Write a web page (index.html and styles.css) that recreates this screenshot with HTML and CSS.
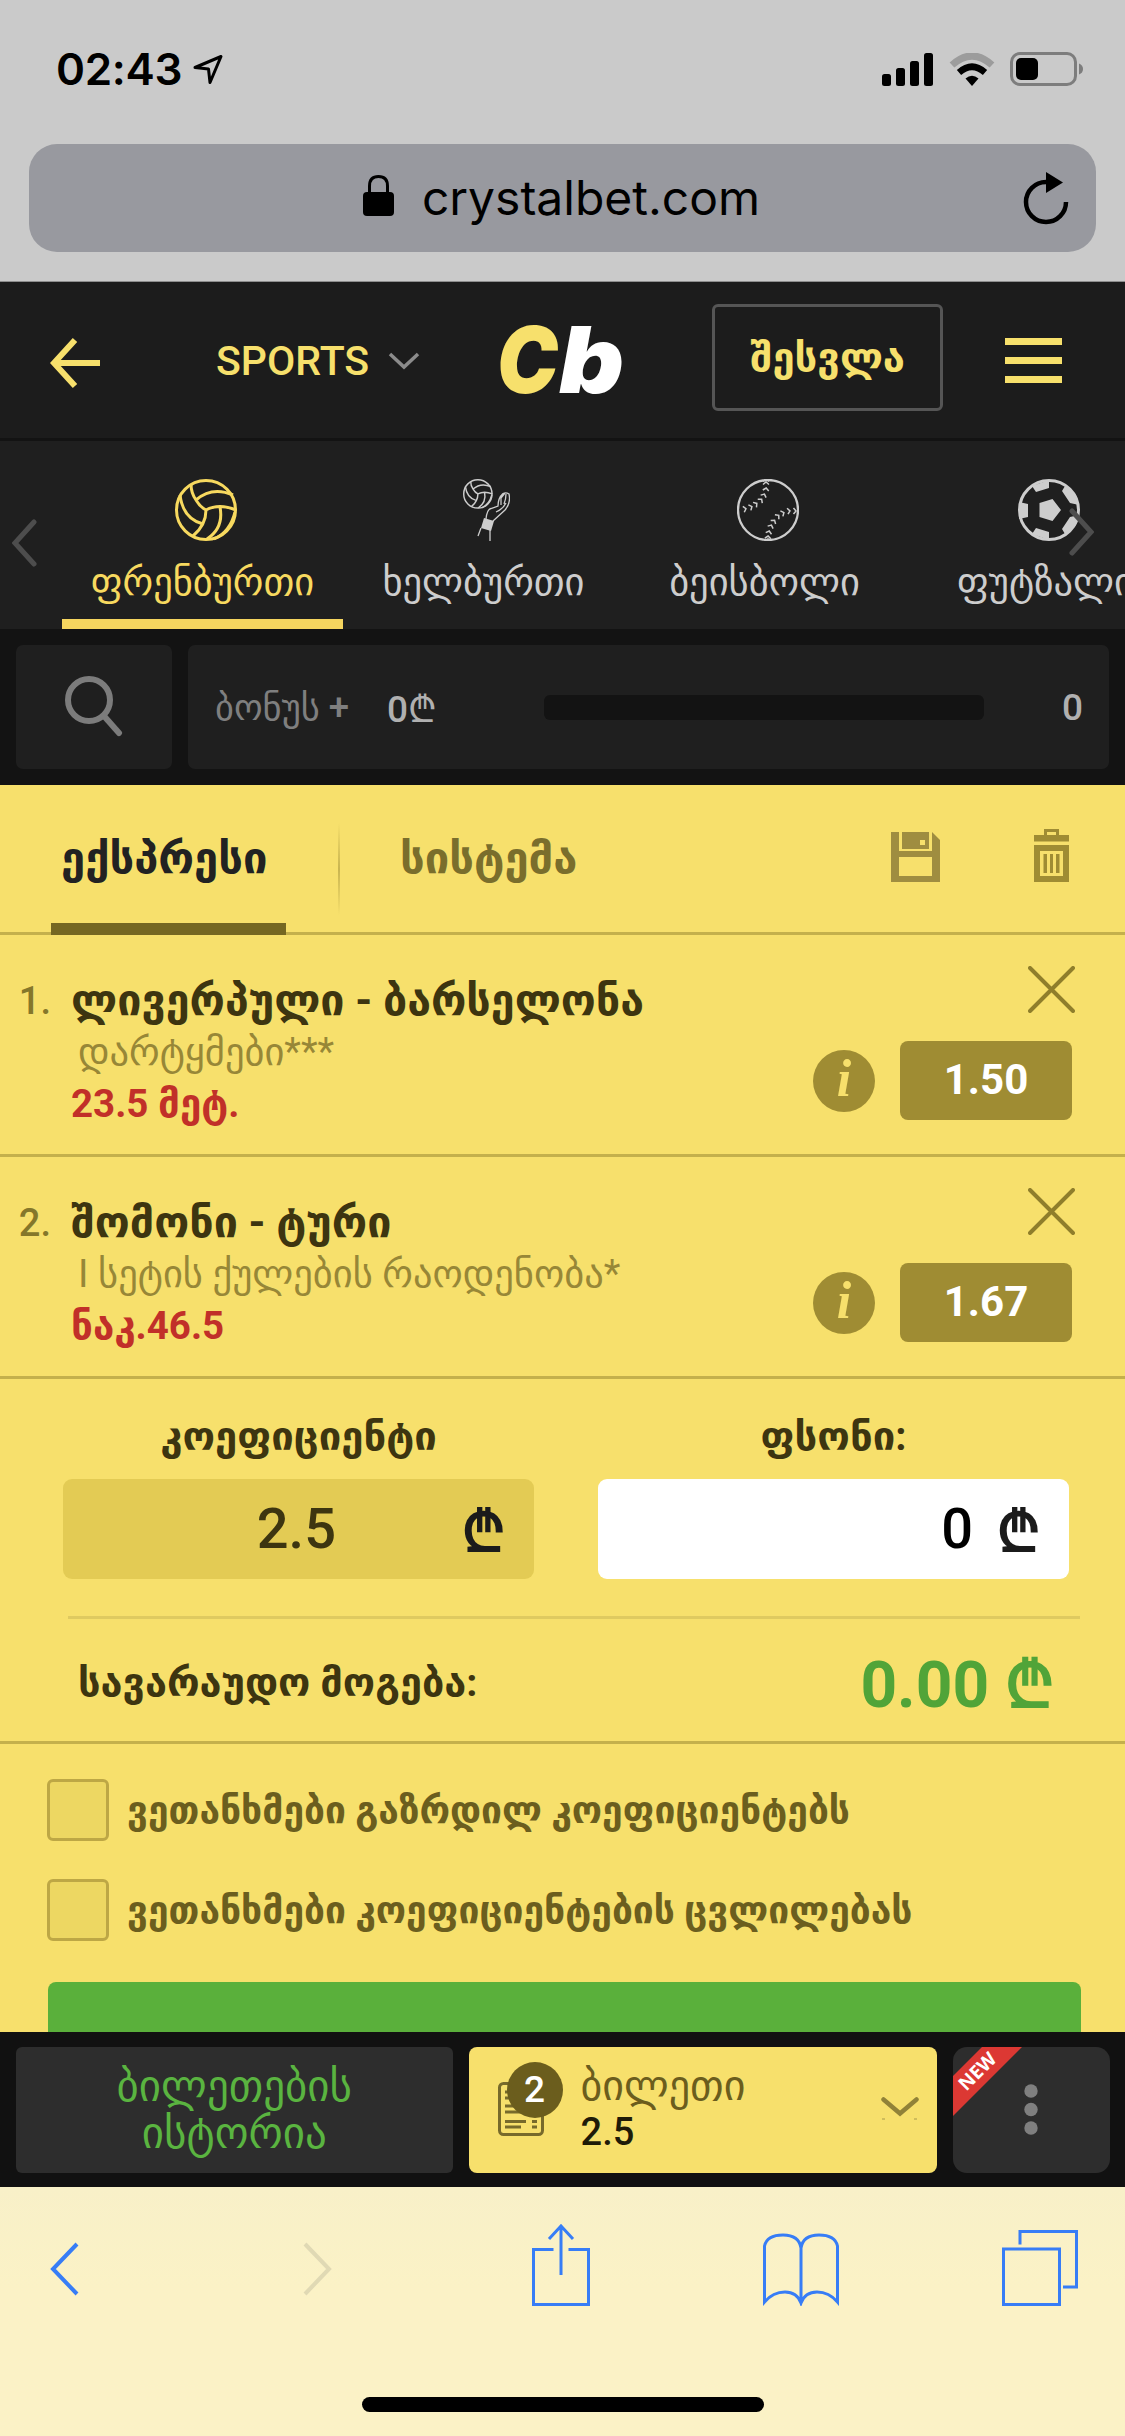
FILE: index.html
```html
<!DOCTYPE html>
<html lang="ka">
<head>
    <meta charset="UTF-8">
    <meta name="viewport" content="width=device-width, initial-scale=1.0">
    <title>Crystalbet</title>
    <link rel="stylesheet" href="styles.css">
</head>
<body>
    <div class="browser-top">
        <div class="status">
            <span class="time">02:43</span>
            <svg class="location" width="31" height="31" viewBox="0 0 31 31"><path d="M2 13.500L28 2.500L17 28.500L15.500 15Z" fill="none" stroke="#000" stroke-width="3" stroke-linejoin="round"/></svg>
            <div class="status-icons">
                <svg width="52" height="33" viewBox="0 0 52 33"><rect x="0" y="21" width="9" height="12" rx="2.500"/><rect x="14" y="15" width="9" height="18" rx="2.500"/><rect x="28" y="8" width="9" height="25" rx="2.500"/><rect x="42" y="0" width="9" height="33" rx="2.500"/></svg>
                <svg width="46" height="33" viewBox="0 0 46 33"><path d="M3 12Q23-6 43 12" fill="none" stroke="#9c9c9c" stroke-width="7"/><path d="M10 19.500Q23 8 36 19.500" fill="none" stroke="#000" stroke-width="6.500"/><path d="M16.500 25.500Q23 20 29.500 25.500L23 33Z"/></svg>
                <svg width="75" height="34" viewBox="0 0 75 34"><rect x="1.500" y="1.500" width="64" height="31" rx="8.500" fill="none" stroke="#7d7d7d" stroke-width="3"/><rect x="6" y="6" width="22" height="22" rx="5"/><path d="M69 11.500Q73 13 73 17T69 22.500Z" fill="#7d7d7d"/></svg>
            </div>
        </div>
        <div class="url-bar">
            <svg class="lock" width="31" height="42" viewBox="0 0 31 42"><rect x="0" y="17" width="31" height="24" rx="4"/><path d="M6.500 18V11Q6.500 1.500 15.500 1.500T24.500 11V18" fill="none" stroke="#000" stroke-width="3"/></svg>
            <span>crystalbet.com</span>
            <svg class="reload" width="48" height="54" viewBox="0 0 48 54"><path d="M24 11A20 20 0 1 0 44 31" fill="none" stroke="#000" stroke-width="4.500"/><path d="M24 1L41 11.500L24 22Z"/></svg>
        </div>
    </div>

    <header class="header">
        <svg class="back" width="50" height="52" viewBox="0 0 50 52"><path d="M25 3L4 26L25 49M4 26H50" fill="none" stroke="#f7e06c" stroke-width="6"/></svg>
        <div class="menu-name">SPORTS
            <svg width="32" height="20" viewBox="0 0 32 20"><path d="M2 3L16 16L30 3" fill="none" stroke="#8b8b8b" stroke-width="3.500"/></svg>
        </div>
        <svg class="logo" width="128" height="76" viewBox="0 0 128 76"><text class="logo-c" x="-3" y="71" textLength="61" lengthAdjust="spacingAndGlyphs">C</text><text class="logo-b" x="59" y="71" textLength="65" lengthAdjust="spacingAndGlyphs">b</text></svg>
        <a class="login">შესვლა</a>
        <div class="burger"><i></i><i></i><i></i></div>
    </header>

    <nav class="sports">
        <div class="sport active">
            <svg width="62" height="62" viewBox="0 0 62 62">
                <g id="volleyball" fill="none" stroke="currentColor" stroke-width="3">
                    <circle cx="31" cy="31" r="29.500"/>
                    <path d="M16 5Q16 14 21 21Q25 28 31 31Q31 46 18 57M31 31Q44 24 61 31M21 21Q37 7 58 16M5 16Q8 40 28 45M45 28Q49 49 32 60M60 33Q55 53 39 60"/>
                </g>
            </svg>
            <span>ფრენბურთი</span>
        </div>
        <div class="sport">
            <svg width="47" height="62" viewBox="0 0 47 62">
                <use href="#volleyball" transform="scale(.48)"/>
                <path d="M23 40Q24 30 28 29.500L35 27Q35 19 40 14.500Q43 13 46 15Q48 24 42 31L30 42M33 33Q40 30 43 24M38 26V19L42 14M41 25Q43 20 43 15M18 49L15 57M27 51V62" fill="none" stroke="currentColor" stroke-width="1.300"/>
                <path d="M21 39L31 42L28 52L18 49Z" fill="currentColor"/>
            </svg>
            <span>ხელბურთი</span>
        </div>
        <div class="sport">
            <svg width="62" height="62" viewBox="0 0 62 62">
                <defs><marker id="stitch" orient="auto" markerUnits="userSpaceOnUse" markerWidth="8" markerHeight="8" refX="4" refY="4"><path d="M2.500 1L5 4L2.500 7" fill="none" stroke="#cdcdcd" stroke-width="1.500"/></marker></defs>
                <circle cx="31" cy="31" r="30" fill="none" stroke="currentColor" stroke-width="2.300"/>
                <path d="M2 31L8 30L14 28L19 25L24 21L27 16L29 10L29 4L29 1M31 61L31 58L32 53L34 47L37 42L41 37L46 34L52 32L58 32L61 32" fill="none" marker-mid="url(#stitch)"/>
            </svg>
            <span>ბეისბოლი</span>
        </div>
        <div class="sport">
            <svg width="62" height="62" viewBox="0 0 62 62">
                <circle cx="31" cy="31" r="29.500" fill="none" stroke="currentColor" stroke-width="3"/>
                <path fill="currentColor" d="M21.500 24L34.500 20L43 31L34.500 42L21.500 38ZM1 23L10 25V38L1 40ZM14 7L18 13L31 9V1ZM44 12L47 7L58 16L61 26L52 24ZM14 55L18 49L31 53V61ZM44 50L47 55L58 46L61 36L52 38Z"/>
            </svg>
            <span>ფუტზალი</span>
        </div>
        <svg class="arrow arrow-left" width="26" height="48" viewBox="0 0 26 48"><path d="M22 3L3 24L22 45" fill="none" stroke="#4d4d4d" stroke-width="5" stroke-linecap="round"/></svg>
        <svg class="arrow arrow-right" width="26" height="48" viewBox="0 0 26 48"><path d="M4 3L23 24L4 45" fill="none" stroke="#4d4d4d" stroke-width="5" stroke-linecap="round"/></svg>
    </nav>

    <div class="tools">
        <div class="search">
            <svg width="58" height="64" viewBox="0 0 58 64"><circle cx="24" cy="25" r="21" fill="none" stroke="#7c7c7c" stroke-width="6"/><path d="M39 41L54 58" stroke="#7c7c7c" stroke-width="6" stroke-linecap="round"/></svg>
        </div>
        <div class="bonus">
            <span class="bonus-name">ბონუს +</span>
            <span class="bonus-sum">0₾</span>
            <span class="progress"></span>
            <span class="bonus-count">0</span>
        </div>
    </div>

    <main class="slip">
        <div class="slip-tabs">
            <div class="slip-tab current">ექსპრესი</div>
            <div class="divider"></div>
            <div class="slip-tab">სისტემა</div>
            <svg class="save" width="49" height="50" viewBox="0 0 49 50"><path fill="#9f8d40" fill-rule="evenodd" d="M0 0H8V19H41V0L49 8V50H0ZM8 25V44H41V25ZM11 0H38V17H11ZM29 8V13H34V8Z"/></svg>
            <svg class="trash" width="35" height="53" viewBox="0 0 35 53"><path fill="#9f8c33" fill-rule="evenodd" d="M0 6H10V0H25V6H35V12.500H0ZM13 3V6H22V3ZM0 16H35V53H0ZM6 22V47H29V22Z"/><path fill="#9f8c33" d="M9.500 25h3.500v19H9.500ZM16 25h3v19h-3ZM22 25h3.500v19H22Z"/></svg>
        </div>

        <div class="bet">
            <div class="bet-no">1.</div>
            <div class="bet-info">
                <div class="bet-title">ლივერპული - ბარსელონა</div>
                <div class="bet-market">დარტყმები***</div>
                <div class="bet-pick">23.5 მეტ.</div>
            </div>
            <div class="bet-side">
                <svg class="remove" width="47" height="47" viewBox="0 0 47 47"><path d="M2 2L45 45M45 2L2 45" stroke="#8f7e2b" stroke-width="4" stroke-linecap="round"/></svg>
                <div class="bet-odds"><span class="info">i</span><span class="odd">1.50</span></div>
            </div>
        </div>

        <div class="bet">
            <div class="bet-no">2.</div>
            <div class="bet-info">
                <div class="bet-title">შომონი - ტური</div>
                <div class="bet-market">I სეტის ქულების რაოდენობა*</div>
                <div class="bet-pick">ნაკ.46.5</div>
            </div>
            <div class="bet-side">
                <svg class="remove" width="47" height="47" viewBox="0 0 47 47"><path d="M2 2L45 45M45 2L2 45" stroke="#8f7e2b" stroke-width="4" stroke-linecap="round"/></svg>
                <div class="bet-odds"><span class="info">i</span><span class="odd">1.67</span></div>
            </div>
        </div>

        <div class="stake">
            <div class="field">
                <label>კოეფიციენტი</label>
                <div class="box coef"><span class="value">2.5</span><span class="lari">₾</span></div>
            </div>
            <div class="field">
                <label>ფსონი:</label>
                <div class="box amount"><span class="value">0</span><span class="lari">₾</span></div>
            </div>
        </div>

        <div class="win">
            <span>სავარაუდო მოგება:</span>
            <span class="win-sum">0.00 ₾</span>
        </div>

        <div class="agree">
            <div class="check"><i></i><span>ვეთანხმები გაზრდილ კოეფიციენტებს</span></div>
            <div class="check"><i></i><span>ვეთანხმები კოეფიციენტების ცვლილებას</span></div>
        </div>
        <div class="place-bet"></div>
    </main>

    <div class="bottom">
        <div class="history"><span>ბილეთების</span><span>ისტორია</span></div>
        <div class="ticket">
            <div class="ticket-icon">
                <svg width="47" height="54" viewBox="0 0 47 54"><rect x="1.500" y="1.500" width="43" height="51" rx="4" fill="none" stroke="#776a2b" stroke-width="3"/><path d="M7 10H40M7 16H40M7 24H40M7 30H40M7 39.500H28M34 39.500H39M7 45H23M34 45H39" stroke="#776a2b" stroke-width="3"/></svg>
                <span class="badge">2</span>
            </div>
            <div class="ticket-text"><span>ბილეთი</span><b>2.5</b></div>
            <svg class="ticket-arrow" width="38" height="24" viewBox="0 0 38 24"><path d="M2.500 2.500L19 16.500L35.500 2.500" fill="none" stroke="#918238" stroke-width="4.500" stroke-linecap="round"/><path d="M1 22h3M33 22h3" stroke="#a89a4a" stroke-width="1"/></svg>
        </div>
        <div class="more">
            <svg width="157" height="126" viewBox="0 0 157 126"><path d="M0 29L29 0H69L0 69Z" fill="#dc3833"/><text class="new" transform="rotate(-45 24 24)" x="24" y="31" text-anchor="middle">NEW</text><g fill="#7f7f7f"><circle cx="78" cy="44" r="6.700"/><circle cx="78" cy="62.500" r="6.700"/><circle cx="78" cy="81" r="6.700"/></g></svg>
        </div>
    </div>

    <footer class="browser-bottom">
        <div class="toolbar">
            <svg class="t-back" width="30" height="54" viewBox="0 0 30 54"><path d="M27 2L3 27L27 52" fill="none" stroke="#377df6" stroke-width="4"/></svg>
            <svg class="t-forward" width="30" height="54" viewBox="0 0 30 54"><path d="M3 2L27 27L3 52" fill="none" stroke="#e0d9b4" stroke-width="4"/></svg>
            <svg class="t-share" width="58" height="82" viewBox="0 0 58 82"><path d="M21.500 25.500H1.500V80.500H56.500V25.500H36.500M29 51V3M17 15L29 2L41 15" fill="none" stroke="#377df6" stroke-width="3"/></svg>
            <svg class="t-book" width="76" height="73" viewBox="0 0 76 73"><path d="M38 70V15Q36 2 20 2T1.500 13V69Q10 59 22 59T38 70Q42 59 54 59T74.500 69V13Q72 2 56 2T38 15" fill="none" stroke="#377df6" stroke-width="3"/></svg>
            <svg class="t-tabs" width="76" height="76" viewBox="0 0 76 76"><path d="M1.500 19H57.500V74.500H1.500ZM18 14.500V1.500H74.500V57H61" fill="none" stroke="#377df6" stroke-width="3"/></svg>
        </div>
        <div class="home-bar"></div>
    </footer>
</body>
</html>
```
FILE: styles.css
```css
* {
    box-sizing: border-box;
}
body {
    margin: 0;
    width: 1125px;
    height: 2436px;
    overflow: hidden;
    position: relative;
    display: flex;
    flex-direction: column;
    font-family: Roboto, "DejaVu Sans", sans-serif;
    background: #131313;
}
svg {
    display: block;
    flex: none;
}

/* Browser top */
.browser-top {
    height: 282px;
    flex: none;
    background: #cacaca;
    border-bottom: 1px solid #8d8d8d;
}
.status {
    display: flex;
    align-items: center;
    height: 138px;
    padding: 0 40px 0 56px;
}
.time {
    font: 600 44px/1 Inter, sans-serif;
    letter-spacing: -0.3px;
}
.location {
    margin-left: 11px;
}
.status-icons {
    display: flex;
    align-items: center;
    gap: 15px;
    margin-left: auto;
}
.url-bar {
    position: relative;
    display: flex;
    align-items: center;
    justify-content: center;
    gap: 28px;
    height: 108px;
    margin: 6px 29px 0;
    padding: 0 2px 1px 0;
    border-radius: 28px;
    background: #98999f;
    font: 400 48px/1 Inter, sans-serif;
}
.url-bar .lock {
    margin-top: -3px;
}
.reload {
    position: absolute;
    right: 26px;
    top: 27px;
}

/* Header */
.header {
    display: flex;
    align-items: center;
    height: 159px;
    flex: none;
    border-bottom: 3px solid #131313;
    background: #1c1c1c;
    color: #f7e06c;
}
.back {
    margin: 6px 0 0 50px;
}
.menu-name {
    display: flex;
    align-items: center;
    gap: 19px;
    margin: 2px 0 0 116px;
    font-size: 41px;
    font-weight: 500;
}
.logo {
    margin-left: 80px;
    overflow: visible;
}
.logo-c, .logo-b {
    font: italic 900 92px Inter, sans-serif;
    fill: #f7e06c;
}
.logo-b {
    fill: #fff;
}
.login {
    display: flex;
    align-items: center;
    justify-content: center;
    width: 231px;
    height: 107px;
    margin: -6px 0 0 84px;
    border: 3px solid #555;
    border-radius: 6px;
    font-size: 40px;
    font-weight: 700;
}
.burger {
    display: flex;
    flex-direction: column;
    gap: 12px;
    margin-left: 62px;
}
.burger i {
    width: 57px;
    height: 7px;
    background: #f7e06c;
}

/* Sports carousel */
.sports {
    position: relative;
    display: flex;
    height: 188px;
    flex: none;
    padding-left: 62px;
    overflow: hidden;
    background: #1f1f1f;
    color: #cdcdcd;
}
.sport {
    display: flex;
    flex-direction: column;
    align-items: center;
    width: 281px;
    flex: none;
    padding-top: 38px;
    font-size: 38.5px;
}
.sport svg {
    margin-left: 6px;
}
.sport span {
    margin-top: 18px;
}
.sport.active {
    border-bottom: 10px solid #f5d55f;
    color: #f7d95f;
}
.arrow {
    position: absolute;
    left: 12px;
    top: 78px;
}
.arrow-right {
    left: 1068px;
    top: 67px;
}

/* Search and bonus */
.tools {
    display: flex;
    gap: 16px;
    height: 156px;
    flex: none;
    padding: 16px;
    background: #131313;
}
.search, .bonus {
    display: flex;
    align-items: center;
    border-radius: 7px;
    background: #1f1f1f;
}
.search {
    width: 156px;
    justify-content: center;
}
.bonus {
    flex: 1;
    padding: 0 26px 0 27px;
    font-size: 37px;
    font-weight: 500;
    color: #b0b0b0;
}
.bonus-name {
    width: 172px;
    font-size: 36.5px;
    white-space: nowrap;
    color: #7f7f7f;
}
.progress {
    width: 440px;
    height: 25px;
    margin-left: auto;
    border-radius: 6px;
    background: #131313;
}
.bonus-count {
    margin-left: 78px;
}

/* Bet slip */
.slip {
    height: 1247px;
    flex: none;
    overflow: hidden;
    background: #f7e06c;
    color: #3d3510;
}
.slip-tabs {
    display: flex;
    height: 150px;
    border-bottom: 3px solid #c4b04c;
    font-size: 43.5px;
    font-weight: 700;
    color: #7a6e2c;
}
.slip-tab {
    height: 150px;
    padding-top: 48px;
}
.slip-tab.current {
    width: 235px;
    margin-left: 51px;
    padding-left: 10px;
    border-bottom: 12px solid #756722;
    color: #222;
}
.divider {
    width: 2px;
    height: 92px;
    margin: 38px 60px 0 52px;
    background: linear-gradient(transparent, #c9b550, transparent);
}
.save {
    margin: 47px 94px 0 auto;
}
.trash {
    margin: 44px 56px 0 0;
}
.bet {
    display: flex;
    height: 222px;
    border-bottom: 3px solid #c4b04c;
}
.bet-no {
    width: 71px;
    padding: 39px 20px 0 0;
    font-size: 38px;
    font-weight: 500;
    line-height: 54px;
    text-align: right;
    color: #85772a;
}
.bet-info {
    flex: 1;
    padding-top: 39px;
    line-height: 52px;
}
.bet-info > div {
    height: 52px;
    white-space: nowrap;
}
.bet-title {
    font-size: 43px;
    font-weight: 700;
}
.bet-market {
    padding-left: 7px;
    font-size: 38.5px;
    color: #978737;
}
.bet-pick {
    font-size: 38.5px;
    font-weight: 700;
    color: #c13029;
}
.bet-side {
    display: flex;
    flex-direction: column;
    align-items: flex-end;
    gap: 28px;
    padding: 31px 53px 0 0;
}
.remove {
    margin-right: -3px;
}
.bet-odds {
    display: flex;
    align-items: center;
    gap: 25px;
    margin-left: -260px;
}
.info {
    width: 62px;
    height: 62px;
    border-radius: 50%;
    background: #9f8c33;
    font: italic 700 52px/58px "Liberation Serif", serif;
    text-align: center;
    color: #f7e06c;
}
.odd {
    width: 172px;
    height: 79px;
    border-radius: 8px;
    background: #9f8c33;
    font-size: 42px;
    font-weight: 700;
    line-height: 78px;
    text-align: center;
    color: #fff;
}
.stake {
    display: flex;
    justify-content: space-between;
    height: 240px;
    margin: 0 45px 0 68px;
    padding: 34px 11px 0 0;
    border-bottom: 3px solid #dfca60;
}
.field {
    width: 471px;
    margin-left: -5px;
    font-size: 40px;
    font-weight: 700;
    text-align: center;
}
.field label {
    display: block;
    height: 66px;
}
.box {
    display: flex;
    align-items: center;
    justify-content: flex-end;
    height: 100px;
    padding-right: 29px;
    border-radius: 9px;
    background: #e3cb54;
    font-size: 56px;
    font-weight: 500;
}
.coef .value {
    margin-right: 126px;
}
.amount {
    background: #fff;
    color: #000;
}
.amount .value {
    margin-right: 24px;
}
.lari {
    font-weight: 700;
    color: #1b1b1b;
}
.win {
    display: flex;
    align-items: center;
    justify-content: space-between;
    height: 125px;
    padding: 4px 71px 0 78px;
    border-bottom: 3px solid #c4b04c;
    font-size: 39.7px;
    font-weight: 700;
}
.win-sum {
    font-size: 64px;
    color: #51a438;
}
.agree {
    display: flex;
    flex-direction: column;
    gap: 38px;
    padding: 35px 0 41px 47px;
    font-size: 37.2px;
    font-weight: 700;
    color: #6b5e1e;
}
.check {
    display: flex;
    align-items: center;
    gap: 18px;
    height: 62px;
    white-space: nowrap;
}
.check i {
    width: 62px;
    height: 62px;
    border: 3px solid #bda745;
    border-radius: 6px;
    background: #edd762;
}
.place-bet {
    height: 100px;
    margin: 0 44px 0 48px;
    border-radius: 8px;
    background: #5ab03b;
}

/* Bottom panel */
.bottom {
    display: flex;
    gap: 16px;
    height: 155px;
    flex: none;
    padding: 15px 15px 14px 16px;
    background: #111;
}
.history {
    display: flex;
    flex-direction: column;
    align-items: center;
    justify-content: center;
    width: 437px;
    border-radius: 6px;
    background: #2d2d2d;
    font-size: 43px;
    font-weight: 500;
    line-height: 47px;
    color: #5ab440;
}
.ticket {
    display: flex;
    width: 469px;
    border-radius: 8px;
    background: #f7e06c;
}
.ticket-icon {
    position: relative;
    margin: 35px 0 0 29px;
}
.badge {
    position: absolute;
    left: 9px;
    top: -20px;
    width: 56px;
    height: 56px;
    border-radius: 50%;
    background: #6b5d1d;
    font-size: 37px;
    font-weight: 500;
    line-height: 56px;
    text-align: center;
    color: #fff;
}
.ticket-text {
    display: flex;
    flex-direction: column;
    width: 268px;
    margin: 16px 0 0 36px;
    font-size: 42px;
    line-height: 46px;
    color: #6b5d1d;
}
.ticket-text b {
    font-size: 38px;
    font-weight: 500;
    color: #1f1b08;
}
.ticket-arrow {
    margin: 50px 0 0 32px;
}
.more {
    width: 157px;
    overflow: hidden;
    border-radius: 14px;
    background: #2d2d2d;
}
.new {
    font: 700 19px "Open Sans", sans-serif;
    fill: #fff;
}

/* Browser bottom */
.browser-bottom {
    flex: 1;
    background: linear-gradient(#f8f0c8, #fbf2c6 40%);
}
.toolbar {
    display: flex;
    align-items: flex-end;
    height: 119px;
}
.t-back {
    margin: 0 0 10px 50px;
}
.t-forward {
    margin: 0 0 10px 222px;
}
.t-share {
    margin-left: 200px;
}
.t-book {
    margin-left: 173px;
}
.t-tabs {
    margin-left: 163px;
}
.home-bar {
    width: 402px;
    height: 15px;
    margin: 91px auto 0;
    border-radius: 8px;
    background: #000;
}
```
